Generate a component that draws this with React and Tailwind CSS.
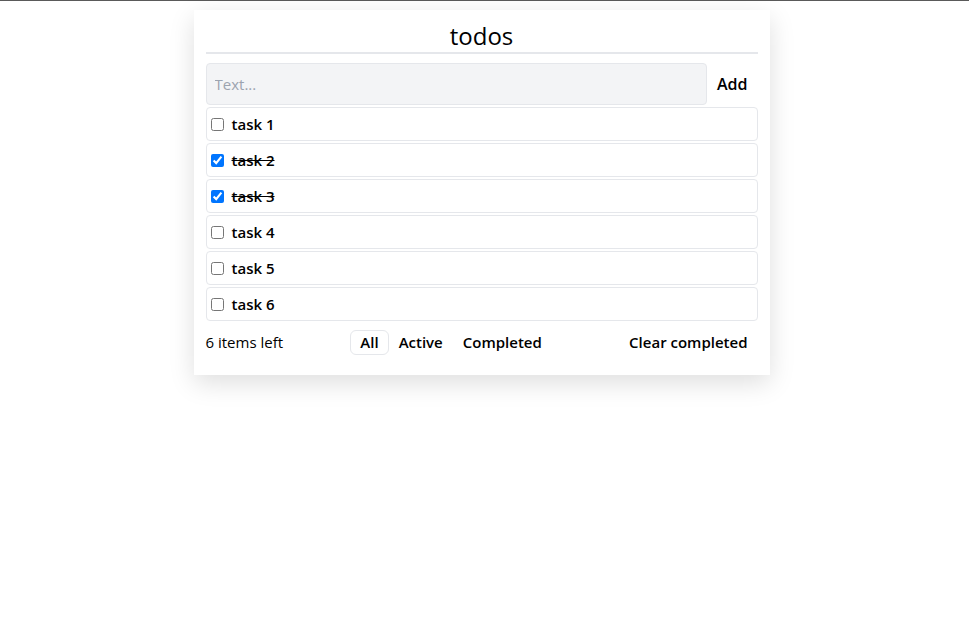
import React, { useState } from "react";

const initialTodos = [
  { id: 1, text: "task 1", done: false },
  { id: 2, text: "task 2", done: true },
  { id: 3, text: "task 3", done: true },
  { id: 4, text: "task 4", done: false },
  { id: 5, text: "task 5", done: false },
  { id: 6, text: "task 6", done: false },
];

export default function App() {
  const [todos, setTodos] = useState(initialTodos);
  const [text, setText] = useState("");
  const [filter, setFilter] = useState("all");

  const toggle = (id) =>
    setTodos(todos.map((t) => (t.id === id ? { ...t, done: !t.done } : t)));

  const addTodo = () => {
    if (!text.trim()) return;
    setTodos([...todos, { id: Date.now(), text: text.trim(), done: false }]);
    setText("");
  };

  const visible = todos.filter((t) =>
    filter === "active" ? !t.done : filter === "completed" ? t.done : true
  );

  const filters = [
    { key: "all", label: "All" },
    { key: "active", label: "Active" },
    { key: "completed", label: "Completed" },
  ];

  return (
    <div className="min-h-screen bg-white border-t border-[#5a5a5a] pt-[9px] pr-[6px] font-['Open_Sans','Noto_Sans',sans-serif] text-black">
      <div className="mx-auto w-[576px] bg-white px-3 pt-3 pb-3 shadow-[0_8px_24px_rgba(0,0,0,0.13)]">
        {/* Title */}
        <h1 className="h-[32px] border-b-2 border-[#e5e7eb] text-center text-[24px] leading-[27px]">
          todos
        </h1>

        {/* Input row */}
        <div className="mt-[9px] flex items-center">
          <input
            value={text}
            onChange={(e) => setText(e.target.value)}
            onKeyDown={(e) => e.key === "Enter" && addTodo()}
            placeholder="Text..."
            className="h-[42px] flex-1 rounded-sm border border-[#e5e7eb] bg-[#f3f4f6] px-2 text-[15px] outline-none placeholder:text-[#9ca3af]"
          />
          <button onClick={addTodo} className="px-[10px] text-[16px] font-semibold">
            Add
          </button>
        </div>

        {/* Todo list */}
        <ul className="mt-[2px] flex flex-col gap-[2px]">
          {visible.map((t) => (
            <li
              key={t.id}
              className="flex h-[34px] items-center gap-2 rounded-sm border border-[#e5e7eb] px-1"
            >
              <input
                type="checkbox"
                checked={t.done}
                onChange={() => toggle(t.id)}
                className="h-[13px] w-[13px]"
              />
              <span className={`text-[15px] font-semibold ${t.done ? "line-through" : ""}`}>
                {t.text}
              </span>
            </li>
          ))}
        </ul>

        {/* Footer */}
        <div className="mt-[9px] mb-2 flex items-center justify-between">
          <span className="text-[15px]">{todos.length} items left</span>
          <div className="flex items-center">
            {filters.map((f) => (
              <button
                key={f.key}
                onClick={() => setFilter(f.key)}
                className={`h-[25px] rounded-md border px-[9px] text-[15px] font-semibold ${
                  filter === f.key ? "border-[#e5e7eb]" : "border-transparent"
                }`}
              >
                {f.label}
              </button>
            ))}
          </div>
          <button
            onClick={() => setTodos(todos.filter((t) => !t.done))}
            className="h-[25px] px-[10px] text-[15px] font-semibold"
          >
            Clear completed
          </button>
        </div>
      </div>
    </div>
  );
}
